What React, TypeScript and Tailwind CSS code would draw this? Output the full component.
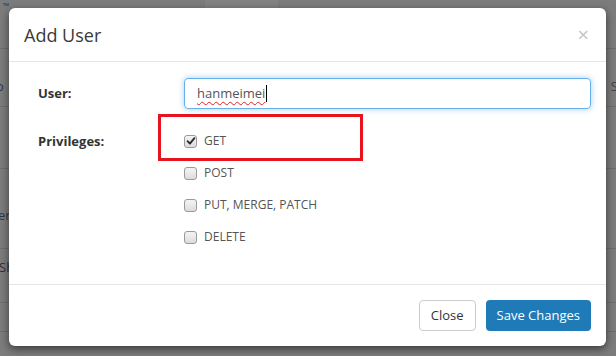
import React from "react";

function Box({ checked }: { checked?: boolean }) {
  return (
    <span className="relative inline-flex h-[13px] w-[13px] shrink-0 items-center justify-center rounded-[3px] border border-[#9a9a9a] bg-gradient-to-b from-[#f4f4f4] to-[#dcdcdc]">
      {checked && (
        <svg width="10" height="10" viewBox="0 0 10 10" className="absolute">
          <path d="M1.6 5.2 L3.9 7.6 L8.4 2.2" fill="none" stroke="#2b2b2b" strokeWidth="1.9" strokeLinecap="round" strokeLinejoin="round" />
        </svg>
      )}
    </span>
  );
}

function Row({ label, checked }: { label: string; checked?: boolean }) {
  return (
    <div className="flex h-[32px] items-center gap-[7px]">
      <Box checked={checked} />
      <span className="text-[12px] text-[#555]">{label}</span>
    </div>
  );
}

export default function App() {
  return (
    <div
      className="relative h-[356px] w-[616px] overflow-hidden bg-[#7c7c7c]"
      style={{ fontFamily: '"Open Sans", "Segoe UI", sans-serif' }}
    >
      {/* background page (dimmed) */}
      <div className="flex h-full flex-col">
        <div className="flex h-[49px] border-b border-[#6e6e6e]">
          <div className="w-[205px] pl-[1px] pt-[2px] text-[8px] font-bold leading-none text-[#213a5c]">
            <div className="pl-[2px]">™</div>
          </div>
          <div className="w-[73px] bg-[#828282]" />
        </div>
        <div className="flex h-[58px] items-start justify-between border-b border-[#6e6e6e] pt-[28px] text-[13px] leading-[18px] text-[#2d3a47]">
          <span className="-ml-[4px]">o</span>
          <span className="-mr-[2px] text-[#444]">S</span>
        </div>
        <div className="flex h-[62px] border-b border-[#6e6e6e]" />
        <div className="flex h-[80px] items-end border-b border-[#6e6e6e] pb-[24px] text-[13px] leading-[18px] text-[#2d3a47]">
          <span className="-ml-[2px]">er</span>
        </div>
        <div className="flex h-[54px] items-start border-b border-[#6e6e6e] pt-[9px] text-[13px] leading-[18px] text-[#3a2a35]">
          <span className="-ml-[1px]">Sh</span>
        </div>
        <div className="h-[29px] border-b border-[#6e6e6e]" />
      </div>

      {/* modal overlay */}
      <div className="absolute left-[9px] top-[8px] flex h-[338px] w-[597px] flex-col rounded-[6px] bg-white shadow-[0_3px_9px_rgba(0,0,0,0.55)]">
        <div className="flex h-[54px] items-center justify-between border-b border-[#e5e5e5] pl-[15px] pr-[17px]">
          <h4 className="text-[18px] leading-[24px] text-[#3a3a3a]">Add User</h4>
          <span className="text-[20px] leading-none text-[#c4c4c4]">×</span>
        </div>

        <div className="flex flex-1 flex-col pl-[29px] pr-[15px] pt-[16px]">
          <div className="flex items-center">
            <label className="w-[146px] text-[13px] font-bold text-[#333]">User:</label>
            <div className="flex h-[31px] flex-1 items-center rounded-[4px] border border-[#66afe9] px-[12px] shadow-[0_0_6px_rgba(102,175,233,0.6)]">
              <span className="text-[13px] text-[#555] underline decoration-[#e02020] decoration-wavy decoration-1 underline-offset-[3px]">
                hanmeimei
              </span>
              <span className="ml-[1px] h-[17px] w-[1px] bg-black" />
            </div>
          </div>

          <div className="mt-[16px] flex">
            <label className="w-[146px] pt-[7px] text-[13px] font-bold text-[#333]">Privileges:</label>
            <div className="relative flex flex-col">
              <div className="pointer-events-none absolute -left-[26px] -top-[11px] h-[47px] w-[205px] border-[3px] border-[#e8131f]" />
              <Row label="GET" checked />
              <Row label="POST" />
              <Row label="PUT, MERGE, PATCH" />
              <Row label="DELETE" />
            </div>
          </div>
        </div>

        <div className="flex h-[62px] items-center justify-end gap-[10px] border-t border-[#e5e5e5] px-[15px]">
          <button className="h-[31px] rounded-[4px] border border-[#ccc] bg-white px-[11px] text-[13px] text-[#333]">
            Close
          </button>
          <button className="h-[31px] rounded-[4px] bg-[#1f7bb7] px-[11px] text-[13px] text-white">
            Save Changes
          </button>
        </div>
      </div>
    </div>
  );
}
